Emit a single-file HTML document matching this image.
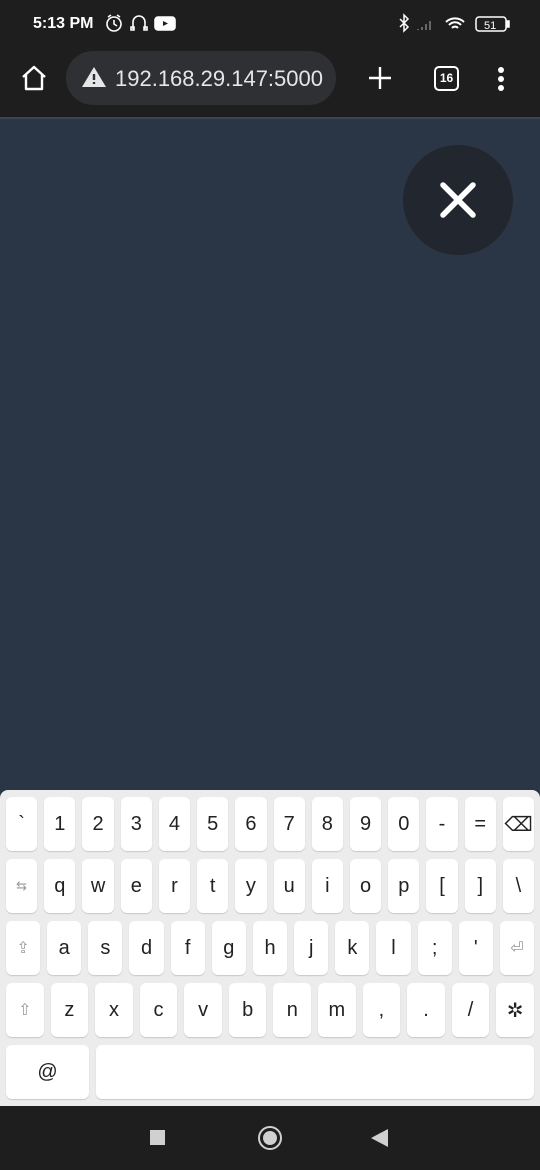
<!DOCTYPE html>
<html><head><meta charset="utf-8"><style>
*{margin:0;padding:0;box-sizing:border-box}
body{width:540px;height:1170px;overflow:hidden;background:#2a3646;font-family:"Liberation Sans","DejaVu Sans",sans-serif;position:relative}
.top{position:absolute;left:0;top:0;width:540px;height:117px;background:#1e1e1f}
.sep{position:absolute;left:0;top:117px;width:540px;height:2px;background:#3c4452}
.time{position:absolute;left:33px;top:15px;color:#fff;font-size:16px;font-weight:bold}
.url{position:absolute;left:66px;top:51px;width:270px;height:54px;border-radius:27px;background:#2f3033}
.url span{position:absolute;left:49px;top:15px;color:#e6e6e6;font-size:22px}
.close{position:absolute;left:403px;top:145px;width:110px;height:110px;border-radius:50%;background:#22272f}
.kb{position:absolute;left:0;top:790px;width:540px;height:316px;background:#ececec;border-radius:8px 8px 0 0}
.row{position:absolute;left:6px;width:528px;height:54px;display:flex;gap:7px}
.k{flex:1;background:#fff;border-radius:6px;box-shadow:0 1px 1px #c8c8c8;display:flex;align-items:center;justify-content:center;font-size:20px;color:#222}
.s{color:#999;font-size:16px}
.nav{position:absolute;left:0;top:1106px;width:540px;height:64px;background:#1e1e1f}
</style></head><body>
<div class="top">
<div class="time">5:13 PM</div>
<svg style="position:absolute;left:105px;top:13px" width="72" height="20" viewBox="0 0 72 20" fill="none" stroke="#fff" stroke-width="1.6">
<circle cx="9" cy="11" r="7"/><path d="M9 7v4l3 2M3 4l3-2M15 4l-3-2"/>
<path d="M28 16v-7a6 6 0 0 1 12 0v7M26 14h3v3h-3zM39 14h3v3h-3z"/>
<rect x="50" y="4" width="20" height="13" rx="3" fill="#fff"/><path d="M58 8l5 2.5-5 2.5z" fill="#1e1e1f" stroke="none"/>
</svg>
<svg style="position:absolute;left:396px;top:13px" width="118" height="22" viewBox="0 0 118 22" fill="none" stroke="#fff" stroke-width="1.5">
<path d="M4 6l8 8-4 4V2l4 4-8 8"/>
<path d="M22 17v-1M26 17v-3M30 17v-6M34 17v-9" stroke="#666" stroke-width="2"/>
<path d="M50 9a13 13 0 0 1 18 0M53 12a8 8 0 0 1 12 0M56 15a4 4 0 0 1 6 0" stroke-width="2"/>
<rect x="80" y="4" width="30" height="14" rx="3"/><rect x="111" y="8" width="2" height="6" fill="#fff"/>
<text x="88" y="16" fill="#fff" stroke="none" font-size="11" font-family="Liberation Sans">51</text>
</svg>
<svg style="position:absolute;left:19px;top:63px" width="30" height="30" viewBox="0 0 30 30" fill="none" stroke="#fff" stroke-width="2.4" stroke-linejoin="round"><path d="M4 14L15 4l11 10M7 12v14h16V12"/></svg>
<div class="url"><svg style="position:absolute;left:15px;top:15px" width="26" height="22" viewBox="0 0 26 22"><path d="M13 1L25 21H1z" fill="#e6e6e6"/><path d="M13 8v6M13 16v2" stroke="#2f3033" stroke-width="2.4"/></svg><span>192.168.29.147:5000</span></div>
<svg style="position:absolute;left:367px;top:65px" width="26" height="26" viewBox="0 0 26 26" stroke="#fff" stroke-width="2.4"><path d="M13 2v22M2 13h22"/></svg>
<div style="position:absolute;left:434px;top:66px;width:25px;height:25px;border:2.4px solid #fff;border-radius:5px;color:#fff;font-size:12px;font-weight:bold;text-align:center;line-height:20px">16</div>
<svg style="position:absolute;left:495px;top:66px" width="12" height="26"><circle cx="6" cy="4" r="3" fill="#fff"/><circle cx="6" cy="13" r="3" fill="#fff"/><circle cx="6" cy="22" r="3" fill="#fff"/></svg>
</div>
<div class="sep"></div>
<div class="close"><svg style="position:absolute;left:35px;top:35px" width="40" height="40" viewBox="0 0 40 40" stroke="#fff" stroke-width="5.5" stroke-linecap="round"><path d="M5 5l30 30M35 5L5 35"/></svg></div>
<div class="kb">
<div class="row" style="top:7px"><div class="k">`</div><div class="k">1</div><div class="k">2</div><div class="k">3</div><div class="k">4</div><div class="k">5</div><div class="k">6</div><div class="k">7</div><div class="k">8</div><div class="k">9</div><div class="k">0</div><div class="k">-</div><div class="k">=</div><div class="k">⌫</div></div>
<div class="row" style="top:69px"><div class="k s" style="font-size:13px">⇆</div><div class="k">q</div><div class="k">w</div><div class="k">e</div><div class="k">r</div><div class="k">t</div><div class="k">y</div><div class="k">u</div><div class="k">i</div><div class="k">o</div><div class="k">p</div><div class="k">[</div><div class="k">]</div><div class="k">\</div></div>
<div class="row" style="top:131px"><div class="k s">⇪</div><div class="k">a</div><div class="k">s</div><div class="k">d</div><div class="k">f</div><div class="k">g</div><div class="k">h</div><div class="k">j</div><div class="k">k</div><div class="k">l</div><div class="k">;</div><div class="k">'</div><div class="k s">⏎</div></div>
<div class="row" style="top:193px"><div class="k s">⇧</div><div class="k">z</div><div class="k">x</div><div class="k">c</div><div class="k">v</div><div class="k">b</div><div class="k">n</div><div class="k">m</div><div class="k">,</div><div class="k">.</div><div class="k">/</div><div class="k">✲</div></div>
<div class="row" style="top:255px"><div class="k" style="flex:0 0 83px">@</div><div class="k" style="flex:1"></div></div>
</div>
<div class="nav">
<div style="position:absolute;left:150px;top:24px;width:15px;height:15px;background:#d0d0d0"></div>
<div style="position:absolute;left:258px;top:20px;width:24px;height:24px;border:2.5px solid #d0d0d0;border-radius:50%"><div style="position:absolute;left:2.5px;top:2.5px;width:14px;height:14px;border-radius:50%;background:#d0d0d0"></div></div>
<svg style="position:absolute;left:371px;top:22px" width="18" height="20"><path d="M0 10L17 1v18z" fill="#d0d0d0"/></svg>
</div>
</body></html>
